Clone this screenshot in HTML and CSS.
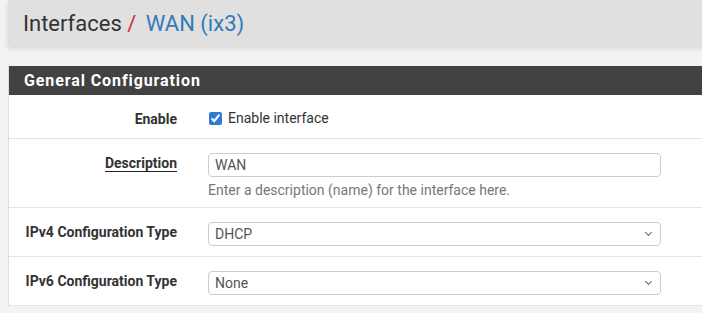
FILE: index.html
```html
<!DOCTYPE html>
<html>
<head>
<meta charset="utf-8"/>
    <title>Interfaces / WAN (ix3)</title>
    <link rel="stylesheet" href="styles.css">
</head>
<body>
    <div class="page">
        <div class="header">
            <h1>Interfaces <span class="sep">/</span> <a href="#">WAN (ix3)</a></h1>
        </div>

        <div class="panel">
            <div class="panel-heading">General Configuration</div>
            <div class="panel-body">
                <div class="form-group">
                    <label class="title" for="enable">Enable</label>
                    <div class="field check">
                        <input type="checkbox" id="enable" checked /> <span>Enable interface</span>
                    </div>
                </div>
                <div class="form-group">
                    <label class="title" for="descr"><span class="required">Description</span></label>
                    <div class="field">
                        <input type="text" class="control" id="descr" value="WAN" />
                        <div class="help">Enter a description (name) for the interface here.</div>
                    </div>
                </div>
                <div class="form-group">
                    <label class="title" for="type">IPv4 Configuration Type</label>
                    <div class="field">
                        <div class="select-wrap">
                            <select class="control" id="type">
                                <option>DHCP</option>
                            </select>
                        </div>
                    </div>
                </div>
                <div class="form-group">
                    <label class="title" for="type6">IPv6 Configuration Type</label>
                    <div class="field">
                        <div class="select-wrap">
                            <select class="control" id="type6">
                                <option>None</option>
                            </select>
                        </div>
                    </div>
                </div>
            </div>
        </div>
    </div>
</body>
</html>
```

FILE: styles.css
```css
html, body {
    margin: 0;
    overflow: hidden;
}

body {
    background: #f3f3f3;
    font-family: Roboto, "Liberation Sans", sans-serif;
    font-size: 14px;
    color: #333;
}

.page {
    margin-left: 8px;
    width: 760px;
}

.header {
    background: #e0e0e0;
    height: 46px;
    padding-left: 15px;
    box-shadow: 0 2px 5px rgba(0, 0, 0, 0.14);
    display: flex;
    align-items: center;
}

.header h1 {
    margin: 0;
    font-size: 22px;
    font-weight: normal;
    color: #333;
}

.header .sep {
    color: #c9302c;
}

.header a {
    color: #337ab7;
    text-decoration: none;
    margin-left: 4px;
}

.panel {
    margin-top: 20px;
    background: #fff;
    border-left: 1px solid #ddd;
}

.panel-heading {
    background: #424242;
    color: #fff;
    font-weight: bold;
    font-size: 16px;
    letter-spacing: 0.9px;
    height: 29px;
    line-height: 29px;
    padding-left: 15px;
}

.form-group {
    display: grid;
    grid-template-columns: 168px 453px;
    column-gap: 31px;
    padding: 14px 0 10px;
    border-bottom: 1px solid #e4e4e4;
}

.title {
    font-weight: bold;
    text-align: right;
    line-height: 18px;
    padding-top: 1px;
}

.required {
    border-bottom: 1px solid #222;
}

.field.check {
    display: flex;
    align-items: center;
    height: 18px;
}

.field.check input {
    margin: 0 6px 0 1px;
    width: 13px;
    height: 13px;
    accent-color: #2f7ad6;
}

.control {
    box-sizing: border-box;
    width: 100%;
    height: 24px;
    border: 1px solid #ccc;
    border-radius: 4px;
    padding: 0 6px;
    font-family: Roboto, "Liberation Sans", sans-serif;
    font-size: 14px;
    color: #555;
    background: #fff;
}

select.control {
    appearance: none;
    -webkit-appearance: none;
}

.select-wrap {
    position: relative;
}

.select-wrap::after {
    content: "";
    position: absolute;
    right: 10px;
    top: 8px;
    width: 4px;
    height: 4px;
    border-right: 1px solid #666;
    border-bottom: 1px solid #666;
    transform: rotate(45deg);
    pointer-events: none;
}

.help {
    color: #777;
    font-size: 14px;
    line-height: 17px;
    margin-top: 5px;
    margin-bottom: -2px;
}
```
